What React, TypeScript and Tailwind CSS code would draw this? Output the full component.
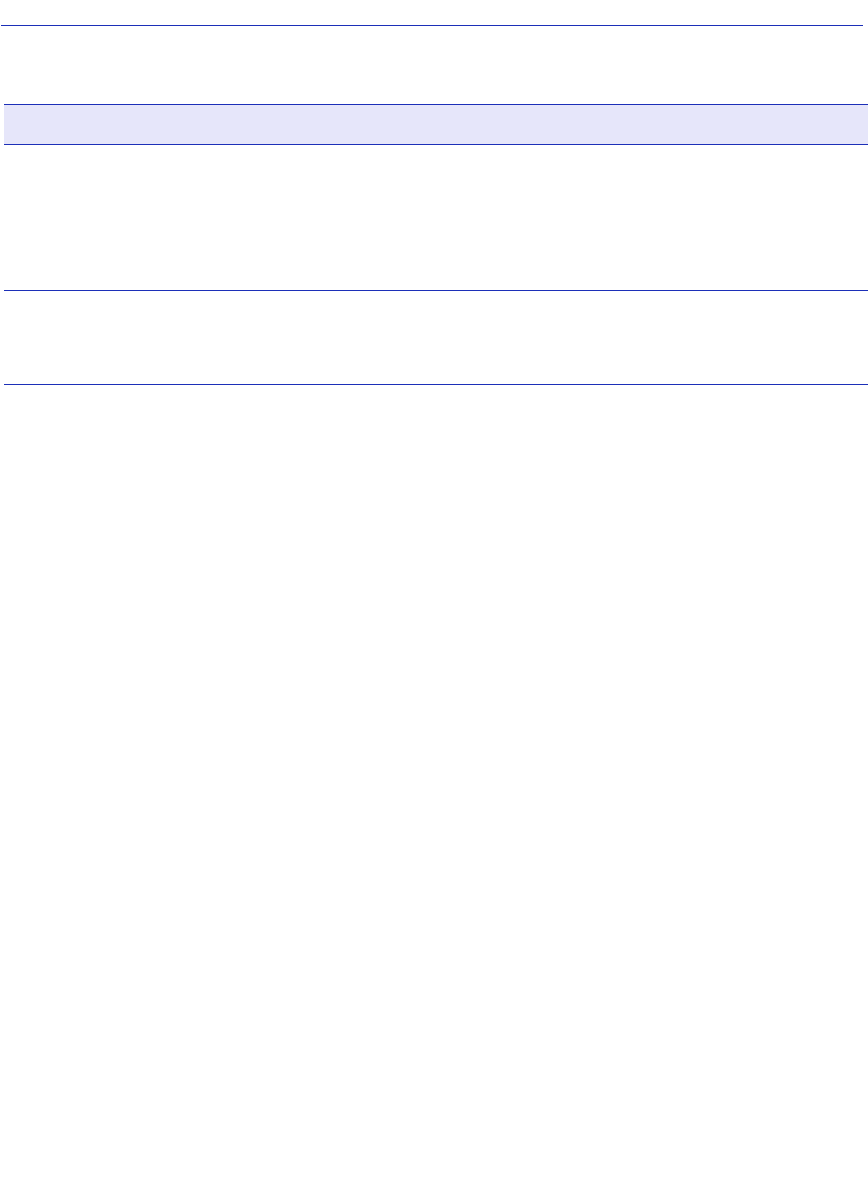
const LINE = "bg-[#1c2fb8]";

export default function App() {
  return (
    <div className="min-h-[1190px] w-[868px] bg-white pt-[25px]">
      <div className={`ml-[1px] h-px w-[862px] ${LINE}`} />

      <div className="ml-[4px] mt-[78px] h-[41px] border-y border-[#1c2fb8] bg-[#e6e6fa]" />

      <div className="ml-[4px] mt-[145px] flex flex-col">
        <div className={`h-px ${LINE}`} />
        <div className="h-[93px]" />
        <div className={`h-px ${LINE}`} />
      </div>
    </div>
  );
}
